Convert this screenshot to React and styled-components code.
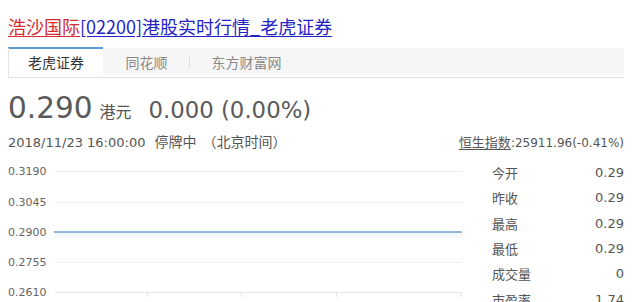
import React from 'react'
import styled, { createGlobalStyle } from 'styled-components'

const GlobalStyle = createGlobalStyle`
  html, body {
    margin: 0;
    padding: 0;
    background: #fff;
    overflow: hidden;
  }
  body {
    font-family: "DejaVu Sans", "Noto Sans CJK SC", sans-serif;
    color: #555;
  }
`

const Page = styled.div`
  width: 616px;
  padding: 0 8px;
  height: 302px;
  overflow: hidden;
`

const Title = styled.h1`
  margin: 14px 0 9px;
  font-size: 18px;
  line-height: 24px;
  font-weight: normal;
  font-family: "Noto Sans CJK SC", "DejaVu Sans", sans-serif;
  white-space: nowrap;
`

const TitleLink = styled.a`
  color: ${p => (p.red ? '#d42a30' : '#2323c4')};
  text-decoration: underline;
  text-underline-offset: 2px;
`

const TabWrap = styled.div`
  border-bottom: 1px solid #e2e2e2;
`

const TabBar = styled.div`
  display: flex;
  align-items: stretch;
  height: 30px;
  background: linear-gradient(#f6f6f6 0, #f6f6f6 26px, #fff 27px);
  border-top: 1px solid transparent;
  box-sizing: border-box;
`

const Tab = styled.div`
  display: flex;
  align-items: center;
  justify-content: center;
  font-family: "Noto Sans CJK SC", sans-serif;
  font-size: 14px;
  color: ${p => (p.active ? '#333' : '#888')};
  background: ${p => (p.active ? '#fff' : 'transparent')};
  border-top: 2px solid ${p => (p.active ? '#5b9ad8' : 'transparent')};
  border-left: 1px solid ${p => (p.active ? '#e4e4e4' : 'transparent')};
  margin-top: -1px;
  width: ${p => p.w}px;
  box-sizing: border-box;
  padding-bottom: 2px;
`

const TabSep = styled.span`
  align-self: center;
  width: 1px;
  height: 13px;
  background: #e0e0e0;
  margin-top: -2px;
`

const PriceRow = styled.div`
  display: flex;
  align-items: baseline;
  margin-top: 13px;
  height: 36px;
  white-space: nowrap;
`

const Price = styled.span`
  font-size: 29.5px;
  color: #5a5a5a;
`

const Unit = styled.span`
  font-family: "Noto Sans CJK SC", sans-serif;
  font-size: 16px;
  margin-left: 7px;
  color: #555;
`

const Change = styled.span`
  font-size: 22.8px;
  margin-left: 17px;
  color: #5a5a5a;
`

const InfoRow = styled.div`
  display: flex;
  justify-content: space-between;
  align-items: baseline;
  margin-top: 5px;
  font-size: 13px;
  line-height: 18px;
  white-space: nowrap;
`

const Cjk = styled.span`
  font-family: "Noto Sans CJK SC", sans-serif;
  font-size: 14px;
  margin-left: ${p => p.ml || 0}px;
`

const IndexLink = styled.span`
  color: #555;
  font-size: 12px;
  u {
    font-family: "Noto Sans CJK SC", sans-serif;
    font-size: 13px;
    text-underline-offset: 2px;
  }
`

const Main = styled.div`
  display: flex;
  gap: 30px;
  margin-top: 8px;
`

const Chart = styled.svg`
  width: 454px;
  height: 150px;
  flex: none;
  display: block;
  text {
    font-family: "DejaVu Sans", sans-serif;
    font-size: 11px;
    fill: #666;
  }
`

const Stats = styled.div`
  width: 132px;
  flex: none;
`

const StatRow = styled.div`
  display: flex;
  justify-content: space-between;
  align-items: center;
  height: 25.3px;
  font-size: 13px;
  color: #555;
  span:first-child {
    font-family: "Noto Sans CJK SC", sans-serif;
  }
`

const gridLines = [
  { label: '0.3190', y: 11 },
  { label: '0.3045', y: 42 },
  { label: '0.2900', y: 72 },
  { label: '0.2755', y: 102 },
  { label: '0.2610', y: 132 },
]

const ticks = [139, 233, 328, 453]

const stats = [
  ['今开', '0.29'],
  ['昨收', '0.29'],
  ['最高', '0.29'],
  ['最低', '0.29'],
  ['成交量', '0'],
  ['市盈率', '1.74'],
]

export default function App() {
  return (
    <Page>
      <GlobalStyle />
      <Title>
        <TitleLink red href="#">浩沙国际</TitleLink>
        <TitleLink href="#">[02200]港股实时行情_老虎证券</TitleLink>
      </Title>

      <TabWrap>
        <TabBar>
          <Tab active w={95}>老虎证券</Tab>
          <Tab w={86}>同花顺</Tab>
          <TabSep />
          <Tab w={112}>东方财富网</Tab>
        </TabBar>
      </TabWrap>

      <PriceRow>
        <Price>0.290</Price>
        <Unit>港元</Unit>
        <Change>0.000 (0.00%)</Change>
      </PriceRow>

      <InfoRow>
        <span>
          2018/11/23 16:00:00
          <Cjk ml={9}>停牌中</Cjk>
          <Cjk ml={6}>（北京时间）</Cjk>
        </span>
        <IndexLink>
          <u>恒生指数</u>:25911.96(-0.41%)
        </IndexLink>
      </InfoRow>

      <Main>
        <Chart viewBox="0 0 454 150">
          {gridLines.map(g => (
            <g key={g.label}>
              <line x1="47" x2="454" y1={g.y + 0.5} y2={g.y + 0.5} stroke="#efefef" strokeWidth="1" />
              <text x="0" y={g.y + 4}>{g.label}</text>
            </g>
          ))}
          <line x1="47" x2="454" y1="132.5" y2="132.5" stroke="#e6e6e6" strokeWidth="1" />
          {ticks.map(x => (
            <line key={x} x1={x + 0.5} x2={x + 0.5} y1="132" y2="137" stroke="#e2e2e2" strokeWidth="1" />
          ))}
          <rect x="47" y="72" width="407" height="6" fill="#f4f9fe" />
          <line x1="46" x2="454" y1="72" y2="72" stroke="#6f9fd3" strokeWidth="1.6" />
        </Chart>

        <Stats>
          {stats.map(([k, v]) => (
            <StatRow key={k}>
              <span>{k}</span>
              <span>{v}</span>
            </StatRow>
          ))}
        </Stats>
      </Main>
    </Page>
  )
}
